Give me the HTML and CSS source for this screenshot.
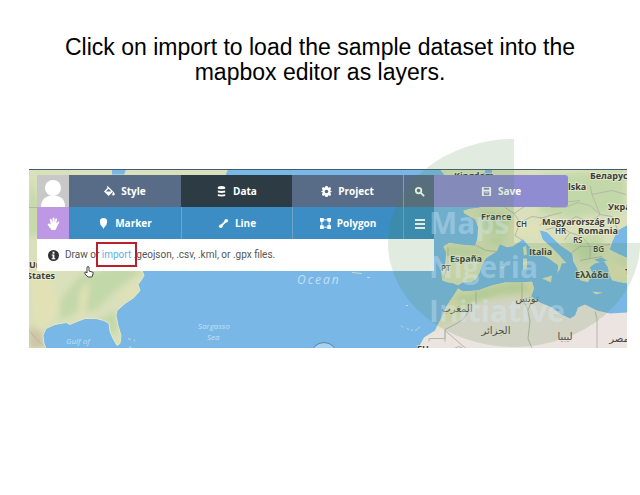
FILE: index.html
```html
<!DOCTYPE html>
<html lang="en">
<head>
<meta charset="utf-8">
<title>Importing a dataset</title>
<link rel="stylesheet" href="styles.css">
</head>
<body>
<main class="slide">
  <h1 class="title">Click on import to load the sample dataset into the mapbox editor as layers.</h1>

  <section class="editor">
    <svg class="map" viewBox="29 169 598 179" preserveAspectRatio="xMidYMid slice" role="img" aria-label="Map">
      <defs>
        <filter id="soft" x="-20%" y="-20%" width="140%" height="140%"><feGaussianBlur stdDeviation="3"/></filter>
        <clipPath id="america"><path d="M29 169H228L215 200L190 240L142 270L144 275L141 280L138 284L140 290L134 297L125 303L117 310L116 315L118 325L121 335L120 343L117 345L113 338L110 331L109 323L104 320L96 318L85 318L77 321L70 324L66 322L55 324L46 328L43 335L44 343L46 348H29Z"/></clipPath>
        <clipPath id="europe"><path id="europe-shape" d="M492 169H627V225L618 230L613 240L610 249L620 254L627 257V283L620 282L612 280L609 273L608 267L604 261L595 263L590 267L593 273L588 282L580 280L577 268L573 261L572 253L560 245L547 232L540 230L543 239L552 247L558 253L567 263L562 263L560 269L557 273L558 265L547 257L536 253L528 245L523 239L513 246L507 247L500 244L497 251L486 258L482 265L480 272L476 279L471 282L463 282L458 285L453 283L447 282L442 280L441 272L445 263L446 252L443 246L449 242L462 244L475 245L477 238L478 227L475 219L471 217L464 213L463 210L470 208L479 207L490 200Z"/></clipPath>
        <clipPath id="africa"><path d="M418 348L424 337L435 330L441 318L447 305L455 293L458 288L463 291L478 290L492 285L505 282L520 282L532 281L534 288L531 296L540 302L552 307L560 313L570 318L575 315L578 307L585 304L597 310L610 313L627 312V348Z"/></clipPath>
      </defs>
      <rect class="sea" x="29" y="169" width="598" height="179"/>
      <g clip-path="url(#america)">
        <rect class="land" x="29" y="169" width="200" height="179"/>
        <g filter="url(#soft)">
          <path class="forest" d="M60 300L80 275L95 272L120 262L142 270L118 288L95 310L75 312L60 320ZM98 320L116 310L118 330L112 335ZM29 180L38 200V235H29Z"/>
          <path class="plain" d="M29 255L48 275L60 300L50 322L35 330ZM80 290L90 280L84 318L78 318ZM116 300L142 274L135 298Z"/>
          <path class="dry" d="M29 325L42 332L46 348H29Z"/>
        </g>
        <path class="sea" d="M112 169H126L124 174H112Z"/>
        <path class="border" d="M29 207H40M29 330L36 338L42 344"/>
      </g>
      <path class="coast" d="M142 270L144 275L141 280L138 284L140 290L134 297L125 303L117 310L116 315L118 325L121 335L120 343L117 345L113 338L110 331L109 323L104 320L96 318L85 318L77 321L70 324L66 322L55 324L46 328L43 335L44 343L46 348"/>
      <path class="land" d="M440 169L444 174L437 178H470L485 172V169Z"/>
      <path class="land" d="M523 247L526 245L527 254L524 255ZM523 258L527 258L527 268L523 269ZM542 278L552 275L551 282ZM592 291L603 292L596 294ZM500 267L504 266L503 268Z"/>
      <g clip-path="url(#europe)">
        <use class="land" href="#europe-shape"/>
        <g filter="url(#soft)">
          <path class="forest" d="M540 175L625 170V210L570 218L540 212ZM480 208L510 215L505 235L485 230ZM446 246L490 250L482 254H446ZM565 240L600 232L605 250L585 262Z"/>
          <path class="plain" d="M505 228L525 222L548 224L535 232L515 235ZM450 262L480 262L470 278L450 276ZM595 265L627 262V278H610Z"/>
          <path class="forest" d="M484 240L505 236L500 245ZM610 258L627 260V265Z"/>
        </g>
        <path class="sea" d="M594 259L602 257L607 260L600 262Z"/>
        <path class="border" d="M476 245L486 250L497 251M505 207L514 213L520 222L515 235L523 240M520 222L532 216L546 218L540 225M514 213L526 205M551 207L565 207L578 202L590 205L600 214M540 218L550 215L562 212M546 229L560 226L570 232L564 240M560 226L576 216L590 222L600 214L612 216L618 230M570 232L582 236L590 246L610 244M572 252L580 246L590 246L590 258L580 260M590 258L602 256M590 185L592 194L612 190L626 194M448 247V264L444 277M592 194L600 214M557 207L562 202L580 200"/>
      </g>
      <g clip-path="url(#africa)">
        <rect class="desert" x="415" y="275" width="212" height="73"/>
        <path class="plain" filter="url(#soft)" d="M430 335L455 283L540 278L536 298L510 296L475 302L455 320L440 326Z"/>
        <path class="forest" filter="url(#soft)" d="M450 296L470 294L485 288L520 281L530 290L500 293L465 303Z"/>
        <path class="border" d="M429 341V338H445V329L455 324L463 319L468 312M445 329V341M445 330L460 343L466 348M454 348L459 346L463 348M522 281V298L527 307L530 320L528 338L532 348M528 310L531 302M595 311L597 318V348M476 291V303"/>
      </g>
      <path class="island" d="M401 325L403 327M407 328L409 329M411 330L413 329M415 330L417 329L420 326M406 305H408M367 277H370M352 272L362 273M128 338L131 339M134 339L135 341M129 346L132 348"/>
      <circle class="dial" cx="324" cy="355" r="13"/>

      <g class="water-name">
        <text x="297" y="283" class="ocean">Ocean</text>
        <text x="198" y="328">Sargasso</text>
        <text x="207" y="339">Sea</text>
        <text x="66" y="343">Gulf of</text>
        <text x="67" y="354">Mexico</text>
      </g>
      <g class="place">
        <text x="29" y="267">Un</text>
        <text x="27" y="278">States</text>
        <text x="454" y="178">Kingdom</text>
        <text x="590" y="178">Беларусь</text>
        <text x="568" y="189">lska</text>
        <text x="608" y="209">Україна</text>
        <text x="481" y="219">France</text>
        <text x="542" y="224">Magyarország</text>
        <text x="578" y="233">Romania</text>
        <text x="529" y="254">Italia</text>
        <text x="450" y="261">España</text>
        <text x="575" y="277">Ελλάδα</text>
        <text x="625" y="274">T</text>
        <text x="417" y="351">EH</text>
      </g>
      <g class="place code">
        <text x="516" y="226">CH</text>
        <text x="607" y="223">MD</text>
        <text x="555" y="233">HR</text>
        <text x="573" y="242">RS</text>
        <text x="593" y="251">BG</text>
        <text x="441" y="270">PT</text>
      </g>
      <g class="arabic">
        <text x="457" y="311" text-anchor="middle">المغرب</text>
        <text x="527" y="301" text-anchor="middle">تونس</text>
        <text x="496" y="333" text-anchor="middle">الجزائر</text>
        <text x="565" y="339" text-anchor="middle">ليبيا</text>
        <text x="619" y="341" text-anchor="middle">مصر</text>
      </g>
    </svg>

    <nav class="toolbar" aria-label="Editor">
      <button class="tool avatar" aria-label="Account">
        <svg viewBox="0 0 32 32"><circle cx="16" cy="13" r="8"/><path d="M4 32C4 25 8 22 12 21H20C25 22 28 25 28 32Z"/></svg>
      </button>
      <button class="tool slate"><svg class="icon" viewBox="0 0 12 12"><path fill-rule="evenodd" d="M3 1L4 0L10 6L5 11L0 6L4 2ZM5 3L2 6H8Z"/><path d="M10 6Q13 9 11 10Q9 11 9 9Z"/></svg>Style</button>
      <button class="tool dark"><svg class="icon" viewBox="0 0 12 12"><path d="M2 1Q6-1 10 1V3Q6 4 2 3ZM2 5Q6 6 10 5V7Q6 8 2 7ZM2 9Q6 10 10 9V11Q6 12 2 11Z"/></svg>Data</button>
      <button class="tool slate"><svg class="icon" viewBox="0 0 12 12"><path fill-rule="evenodd" d="M5 0H7L8 2L10 1L11 3L10 5L12 6L10 7L11 9L10 11L8 10L7 12H5L4 10L2 11L1 9L2 7L0 6L2 5L1 3L2 1L4 2ZM6 4A2 2 0 1 0 6 8A2 2 0 1 0 6 4Z"/></svg>Project</button>
      <button class="tool slate ruled" aria-label="Search"><svg class="icon thin" viewBox="0 0 12 12"><circle cx="5" cy="5" r="3"/><path d="M7 7L11 11"/></svg></button>
      <button class="tool save"><svg class="icon" viewBox="0 0 12 12"><path fill-rule="evenodd" d="M1 1H10L11 2V11H1ZM3 2V4H9V2ZM3 6V10H9V6ZM4 7H8V8H4Z"/></svg>Save</button>

      <button class="tool violet" aria-label="Pan"><svg class="icon hand" viewBox="0 0 14 14"><path d="M4 8L3 3Q3 2 4 2L5 3L6 6V1Q7 0 8 1V6L9 2Q10 1 11 2L10 7L12 5Q14 4 13 6L10 12L9 14H5L1 9Q0 7 2 7Z"/></svg></button>
      <button class="tool blue"><svg class="icon" viewBox="0 0 12 12"><path d="M6 0Q10 0 10 4Q10 7 7 10L6 12L5 10Q2 7 2 4Q2 0 6 0Z"/></svg>Marker</button>
      <button class="tool blue ruled"><svg class="icon" viewBox="0 0 12 12"><circle cx="3" cy="9" r="2"/><circle cx="9" cy="3" r="2"/><path class="stroke" d="M3 9L9 3"/></svg>Line</button>
      <button class="tool blue ruled"><svg class="icon" viewBox="0 0 12 12"><path class="edge" d="M2 2H10V10H2Z"/><path d="M0 0H4V4H0ZM8 0H12V4H8ZM0 8H4V12H0ZM8 8H12V12H8Z"/></svg>Polygon</button>
      <button class="tool blue ruled" aria-label="Layers"><svg class="icon" viewBox="0 0 11 11"><path d="M1 1H11V3H1ZM1 5H11V7H1ZM1 9H11V11H1Z"/></svg></button>

      <p class="hint">
        <svg class="info" viewBox="0 0 12 12"><circle cx="6" cy="6" r="6"/><path d="M5 2H7V4H5ZM4 5H7V9H8V10H4V9H5V6H4Z"/></svg>
        <span>Draw or <a class="import" href="#import">import</a> .geojson, .csv, .kml, or .gpx files.</span>
      </p>
    </nav>

    <svg class="cursor" viewBox="0 0 10 12" aria-hidden="true"><path d="M3 7V1Q4 0 5 1V5L8 6Q10 6 9 8L8 11H4L1 8Q0 6 2 6Z"/></svg>

    <svg class="watermark" viewBox="388 139 252 208" aria-hidden="true">
      <path class="leaf" d="M514 243V139A126 104 0 1 0 640 243Z"/>
      <g class="brand">
        <text x="429" y="234">Maps</text>
        <text x="429" y="278">Nigeria</text>
        <text x="429" y="322">Initiative</text>
      </g>
    </svg>
  </section>
</main>
</body>
</html>
```
FILE: styles.css
```css
* {
  box-sizing: border-box;
}

body {
  margin: 0;
  background: #fff;
  font-family: "Open Sans", "Noto Sans", sans-serif;
}

.slide {
  padding-top: 35px;
  overflow: hidden;
}

.title {
  max-width: 540px;
  margin: 0 auto 84px;
  color: #000;
  font: 400 23px/25px "Liberation Sans", Arial, sans-serif;
  text-align: center;
}

.editor {
  position: relative;
  height: 179px;
  margin: 0 13px 0 29px;
  padding: 5px 0 0 8px;
  border-top: 1px solid #3f5f70;
}

.map {
  position: absolute;
  inset: 0;
  width: 100%;
  height: 100%;
}

.sea { fill: #78b7e6; }
.land { fill: #d9e0bb; }
.forest { fill: #c3d8a8; }
.plain { fill: #e2e1b6; }
.dry { fill: #cfc4a5; }
.desert { fill: #ebe4e1; }

.border {
  fill: none;
  stroke: #b3b8a6;
  stroke-width: 1;
}

.coast {
  fill: none;
  stroke: #e3e8c4;
  stroke-width: 1;
}

.island {
  fill: none;
  stroke: #c5dccb;
  stroke-width: 1;
}

.dial {
  fill: #a9d0ee;
  stroke: #4f83ad;
  stroke-width: 1;
}

.water-name {
  fill: #c4e0f5;
  font-size: 8px;
  font-style: italic;
}

.ocean {
  font-size: 12px;
  letter-spacing: 2px;
}

.place {
  fill: #3b3d3c;
  stroke: #f0f0dc;
  stroke-width: 2;
  stroke-opacity: 0.6;
  paint-order: stroke;
  font-size: 9px;
  font-weight: 700;
}

.code {
  font-size: 8px;
  font-weight: 600;
}

.arabic {
  fill: #4a4a48;
  font: 10px "DejaVu Sans", sans-serif;
}

.toolbar {
  position: relative;
  display: grid;
  grid-template-columns: 32px 112fr 111fr 111fr 31px 134fr;
  grid-auto-rows: 32px;
  width: 90%;
}

.tool {
  display: flex;
  align-items: center;
  justify-content: center;
  gap: 6px;
  padding: 0;
  border: 0;
  color: #fff;
  font: 700 10px/16px "Open Sans", sans-serif;
}

.avatar { background: #c8c8c8; }
.slate { background: #596c87; }
.dark { background: #2d3c44; }
.blue { background: #3b8dc3; }
.violet { background: #be98e4; }

.ruled {
  border-left: 1px solid #6fa5cc;
}

.save {
  border-radius: 0 3px 3px 0;
  background: #8f8cd2;
}

.avatar svg {
  width: 32px;
  height: 32px;
  fill: #fff;
}

.icon {
  width: 11px;
  height: 11px;
  fill: currentColor;
}

.hand {
  width: 13px;
  height: 13px;
}

.thin,
.stroke,
.edge {
  fill: none;
  stroke: currentColor;
  stroke-width: 2;
}

.edge {
  stroke-width: 1;
}

.hint {
  display: flex;
  grid-column: 1 / 6;
  align-items: center;
  gap: 6px;
  margin: 0;
  padding-left: 11px;
  background: #fff;
  color: #555;
  font: 10px/16px Roboto, "Open Sans", sans-serif;
}

.info {
  width: 11px;
  height: 11px;
  fill: #333;
}

.info path {
  fill: #fff;
}

.import {
  position: relative;
  color: #5fb0dc;
  text-decoration: none;
}

.import::after {
  content: "";
  position: absolute;
  inset: -7px -6px;
  border: 2px solid #b8202c;
}

.cursor {
  position: absolute;
  top: 96px;
  left: 55px;
  width: 10px;
  height: 12px;
  fill: #fff;
  stroke: #444;
  stroke-width: 1;
}

.watermark {
  position: absolute;
  top: -31px;
  right: -13px;
  width: 252px;
  height: 208px;
  pointer-events: none;
}

.leaf {
  fill: #4c8236;
  fill-opacity: 0.16;
}

.brand {
  fill: #d8ecff;
  fill-opacity: 0.35;
  font-size: 30px;
  font-weight: 700;
}
```
